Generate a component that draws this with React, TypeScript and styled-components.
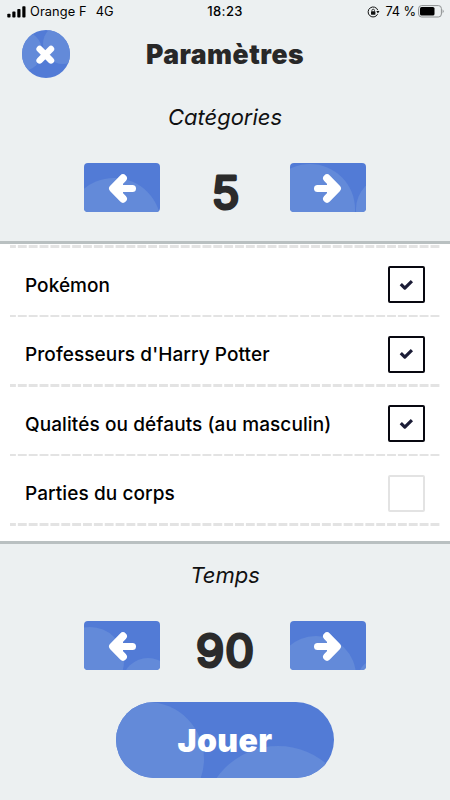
import React from "react";
import styled, { createGlobalStyle } from "styled-components";

const Global = createGlobalStyle`
  * { box-sizing: border-box; }
  html, body { margin: 0; padding: 0; background: #ecf0f1; }
  body { font-family: Inter, "Liberation Sans", sans-serif; color: #000; }
  svg { display: block; flex: none; }
  button { border: 0; padding: 0; font: inherit; }
`;

const Screen = styled.main`
  width: 450px;
  height: 800px;
  display: flex;
  flex-direction: column;
  overflow: hidden;
  background: #ecf0f1;
`;

const StatusBar = styled.div`
  height: 23px;
  flex: none;
  display: grid;
  grid-template-columns: 1fr auto 1fr;
  align-items: center;
  padding: 0 6px 0 7px;
  font-size: 12.8px;
  line-height: 23px;
`;

const StatusGroup = styled.div<{ $end?: boolean }>`
  display: flex;
  align-items: center;
  height: 23px;
  justify-content: ${(p) => (p.$end ? "flex-end" : "flex-start")};
`;

const StatusText = styled.span<{ $left: number; $spacing: number }>`
  margin-left: ${(p) => p.$left}px;
  letter-spacing: ${(p) => p.$spacing}px;
  white-space: nowrap;
`;

const Clock = styled.span`
  font-weight: 500;
  font-size: 13px;
  letter-spacing: 0.4px;
  margin-right: 1px;
`;

const Header = styled.header`
  height: 62px;
  flex: none;
  display: grid;
  grid-template-columns: 48px 1fr 48px;
  align-items: center;
  padding: 0 22px;
`;

const CloseButton = styled.button`
  width: 48px;
  height: 48px;
  border-radius: 50%;
  overflow: hidden;
  background: #527bd6;
`;

const Title = styled.h1`
  margin: 0;
  text-align: center;
  font-size: 26.5px;
  line-height: 32px;
  font-weight: 900;
  letter-spacing: 0.5px;
  color: #282828;
`;

const Setting = styled.section<{ $height: number; $top: number }>`
  height: ${(p) => p.$height}px;
  flex: none;
  padding-top: ${(p) => p.$top}px;
`;

const Caption = styled.h2`
  margin: 0;
  height: 30px;
  line-height: 30px;
  text-align: center;
  font-size: 22px;
  font-weight: 400;
  font-style: italic;
  color: #111;
`;

const Stepper = styled.div`
  display: grid;
  grid-template-columns: 76px 130px 76px;
  justify-content: center;
  align-items: center;
  height: 49px;
  margin-top: 31px;
`;

const StepButton = styled.button`
  width: 76px;
  height: 49px;
  border-radius: 4px;
  overflow: hidden;
  background: #527bd6;
`;

const Value = styled.svg`
  font-family: Inter, sans-serif;
  font-size: 45.5px;
  font-weight: 400;
  overflow: visible;
  fill: #2b2b2b;
  stroke: #2b2b2b;
  stroke-width: 3.2px;
  stroke-linejoin: round;
  stroke-linecap: round;
`;

const List = styled.ul`
  flex: none;
  height: 303px;
  margin: 0;
  padding: 1.4px 10px 0;
  list-style: none;
  background: #fff;
  border-top: 3px solid #b9c0c1;
  border-bottom: 3px solid #b9c0c1;
`;

const Rule = styled.div`
  height: 2.2px;
  flex: none;
  background: repeating-linear-gradient(90deg, #e3e3e3 0 9.2px, transparent 9.2px 10.86px);
  background-position: -3px 0;
  background-size: 10.86px 100%;
`;

const Row = styled.li`
  height: 69.5px;
  display: flex;
  flex-direction: column;
`;

const RowBody = styled.label`
  flex: 1;
  display: flex;
  align-items: center;
  justify-content: space-between;
  padding: 7.2px 15px 0;
`;

const RowText = styled.span<{ $spacing: number }>`
  font-size: 19px;
  font-weight: 500;
  line-height: 23px;
  padding-top: 1px;
  letter-spacing: ${(p) => p.$spacing}px;
  white-space: nowrap;
`;

const Box = styled.span<{ $on: boolean }>`
  width: 37px;
  height: 37px;
  display: flex;
  align-items: center;
  justify-content: center;
  border: 2px solid ${(p) => (p.$on ? "#080810" : "#e3e3e3")};
  border-radius: 2px;
`;

const PlayRow = styled.div`
  display: flex;
  justify-content: center;
  margin-top: 32px;
`;

const PlayButton = styled.button`
  position: relative;
  width: 218px;
  height: 76px;
  border-radius: 38px;
  overflow: hidden;
  background: #527bd6;
`;

const PlayDecor = styled.svg`
  position: absolute;
  inset: 0;
`;

const PlayText = styled.span`
  position: relative;
  font-size: 32px;
  line-height: 78px;
  font-weight: 900;
  letter-spacing: 0.4px;
  color: #fff;
`;

const Battery = styled.svg`
  margin-left: 2px;
`;

type Bubble = [number, number, number];

const Bubbles = ({ items }: { items: Bubble[] }) => (
  <>
    {items.map(([cx, cy, r]) => (
      <circle key={`${cx}-${cy}`} cx={cx} cy={cy} r={r} fill="#638ad9" />
    ))}
  </>
);

const Step = ({ right, label, bubbles }: { right?: boolean; label: string; bubbles: Bubble[] }) => (
  <StepButton aria-label={label}>
    <svg width="76" height="49" viewBox="0 0 76 49">
      <Bubbles items={bubbles} />
      <g
        transform={right ? "translate(76 0) scale(-1 1)" : undefined}
        fill="#fff"
        stroke="#fff"
        strokeWidth="7.8"
        strokeLinecap="round"
        strokeLinejoin="round"
      >
        <path d="M39 15.2 29 25.5 39 35.8" />
        <path d="M31 25.5H48.4" strokeWidth="7.2" />
      </g>
    </svg>
  </StepButton>
);

const categories = [
  { name: "Pokémon", on: true, spacing: 0.05 },
  { name: "Professeurs d'Harry Potter", on: true, spacing: 0.09 },
  { name: "Qualités ou défauts (au masculin)", on: true, spacing: 0.09 },
  { name: "Parties du corps", on: false, spacing: 0.08 },
];

export default function App() {
  return (
    <Screen>
      <Global />
      <StatusBar>
        <StatusGroup>
          <svg width="19" height="12" viewBox="0 0 19 12">
            <rect x="0.3" y="7.8" width="3.2" height="3.7" rx="0.8" />
            <rect x="5.3" y="5.6" width="3.2" height="5.9" rx="0.8" />
            <rect x="10.3" y="3" width="3.2" height="8.5" rx="0.8" />
            <rect x="15.3" y="0.2" width="3.2" height="11.3" rx="0.8" />
          </svg>
          <StatusText $left={4} $spacing={0.1}>Orange F</StatusText>
          <StatusText $left={9} $spacing={0}>4G</StatusText>
        </StatusGroup>
        <Clock>18:23</Clock>
        <StatusGroup $end>
          <svg width="13" height="12" viewBox="0 0 13 12" fill="none" stroke="#111">
            <path d="M10.8 4.2A5 5 0 1 0 10.6 8.2" strokeWidth="1" />
            <path d="M9.3 5.1h3.2L10.9 7.4z" fill="#111" stroke="none" />
            <rect x="4" y="5.3" width="4.4" height="3.4" rx=".4" fill="#111" stroke="none" />
            <path d="M4.9 5.5V4.5a1.3 1.3 0 0 1 2.6 0v1" strokeWidth=".8" />
          </svg>
          <StatusText $left={5} $spacing={-0.1}>74 %</StatusText>
          <Battery width="26" height="13" viewBox="0 0 26 13">
            <rect x="0.6" y="0.6" width="22.8" height="11.4" rx="3" fill="none" stroke="#8d9091" />
            <rect x="2" y="2" width="14.5" height="8.6" rx="1.6" />
            <path d="M24.6 4.2q2 2.1 0 4.2z" fill="#8d9091" />
          </Battery>
        </StatusGroup>
      </StatusBar>

      <Header>
        <CloseButton aria-label="Fermer">
          <svg width="48" height="48" viewBox="0 0 48 48">
            <Bubbles items={[[0, 21, 20], [41, 14, 20]]} />
            <path d="M17.6 19 29 30.4M29 19 17.6 30.4" stroke="#fff" strokeWidth="6.4" strokeLinecap="round" />
          </svg>
        </CloseButton>
        <Title>Paramètres</Title>
      </Header>

      <Setting $height={156} $top={17}>
        <Caption>Catégories</Caption>
        <Stepper>
          <Step label="Moins de catégories" bubbles={[[30, 62, 47]]} />
          <Value width="130" height="49">
            <text x="65.5" y="46" textAnchor="middle">5</text>
          </Value>
          <Step right label="Plus de catégories" bubbles={[[20, 46, 45], [98, 46, 32]]} />
        </Stepper>
      </Setting>

      <List>
        {categories.map((c) => (
          <Row key={c.name}>
            <Rule />
            <RowBody>
              <RowText $spacing={c.spacing}>{c.name}</RowText>
              <Box $on={c.on}>
                {c.on && (
                  <svg width="15" height="12" viewBox="0 0 15 12" fill="none" stroke="#1b1c36" strokeWidth="3.2" strokeLinejoin="round">
                    <path d="M1.8 5.1 5.8 9.1 12.9 2.2" />
                  </svg>
                )}
              </Box>
            </RowBody>
          </Row>
        ))}
        <Rule />
      </List>

      <Setting $height={256} $top={16}>
        <Caption>Temps</Caption>
        <Stepper>
          <Step label="Moins de temps" bubbles={[[6, 40, 34], [64, 63, 26]]} />
          <Value width="130" height="49">
            <text x="65.5" y="46" textAnchor="middle" letterSpacing="1">90</text>
          </Value>
          <Step right label="Plus de temps" bubbles={[[26, 55, 40], [88, 58, 20]]} />
        </Stepper>
        <PlayRow>
          <PlayButton>
            <PlayDecor width="218" height="76" viewBox="0 0 218 76">
              <Bubbles items={[[31, 57, 57], [162, 119, 75]]} />
            </PlayDecor>
            <PlayText>Jouer</PlayText>
          </PlayButton>
        </PlayRow>
      </Setting>
    </Screen>
  );
}
